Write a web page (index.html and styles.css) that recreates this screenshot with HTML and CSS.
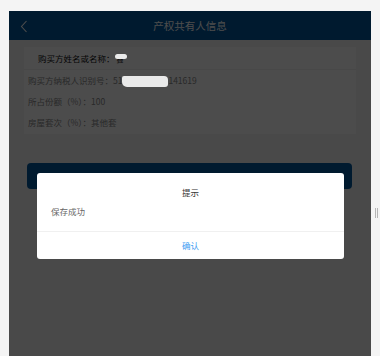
FILE: index.html
```html
<!DOCTYPE html>
<html lang="zh-CN">
<head>
    <meta charset="UTF-8">
    <meta name="viewport" content="width=device-width, initial-scale=1.0">
    <title>产权共有人信息</title>
    <link rel="stylesheet" href="styles.css">
</head>
<body>
    <div class="phone">
        <div class="header">
            <svg class="back" width="8" height="13" viewBox="0 0 8 13">
                <path d="M6.5 1 L1.5 6.5 L6.5 12" fill="none" stroke="#fff" stroke-width="1.1"/>
            </svg>
            <span class="title">产权共有人信息</span>
        </div>

        <div class="card">
            <div class="row row-main">购买方姓名或名称：<span class="redact redact-a"></span><span class="redact-name">鑫</span></div>
            <div class="row">购买方纳税人识别号：51<span class="redact redact-b"></span>141619</div>
            <div class="row">所占份额（%）：100</div>
            <div class="row">房屋套次（%）：其他套</div>
        </div>

        <div class="save-btn"></div>

        <div class="mask"></div>
        <div class="dialog">
            <div class="dialog-title">提示</div>
            <div class="dialog-msg">保存成功</div>
            <div class="dialog-ok">确认</div>
        </div>
    </div>
    <div class="grip"></div>
</body>
</html>
```

FILE: styles.css
```css
body {
    margin: 0;
    background: #f4f4f4;
    font-family: "Noto Sans CJK SC", "Noto Sans", sans-serif;
    overflow: hidden;
}

.phone {
    position: relative;
    margin: 11px 0 0 9px;
    width: 362px;
    height: 345px;
    background: #f5f5f5;
    overflow: hidden;
}

.header {
    height: 29px;
    background: #00589e;
    display: flex;
    align-items: center;
    justify-content: center;
    position: relative;
}

.back {
    position: absolute;
    left: 11px;
    top: 9px;
}

.title {
    color: #fff;
    font-size: 10.5px;
}

.card {
    margin: 7px 15px 0;
    background: #fff;
    height: 87px;
}

.row {
    height: 21px;
    line-height: 21px;
    padding-left: 4px;
    font-size: 8.5px;
    color: #8a8a8a;
    white-space: nowrap;
}

.row-main {
    height: 22px;
    line-height: 22px;
    padding-left: 14px;
    color: #111;
    border-bottom: 1px solid #f2f2f2;
}

.redact {
    position: relative;
    z-index: 3;
    display: inline-block;
    background: #eaeaea;
    filter: blur(0.6px);
    vertical-align: middle;
}

.redact-a {
    width: 12px;
    height: 5px;
    border-radius: 3px;
    margin-top: -6px;
}

.redact-name {
    margin-left: -10px;
    font-size: 7px;
    color: #222;
}

.redact-b {
    width: 46px;
    height: 11px;
    border-radius: 2px 4px 3px 5px;
    margin-top: -1px;
}

.save-btn {
    margin: 29px 19px 0 18px;
    height: 26px;
    background: #00589e;
    border-radius: 4px;
}

.mask {
    position: absolute;
    inset: 0;
    background: rgba(0, 0, 0, 0.7);
    z-index: 2;
}

.dialog {
    position: absolute;
    z-index: 4;
    left: 28px;
    top: 162px;
    width: 307px;
    background: #fff;
    border-radius: 3px;
    font-size: 8.5px;
}

.dialog-title {
    text-align: center;
    color: #333;
    line-height: 14px;
    padding-top: 12px;
}

.dialog-msg {
    color: #666;
    line-height: 14px;
    padding: 5px 14px 13px;
}

.dialog-ok {
    border-top: 1px solid #f0f0f0;
    height: 27px;
    line-height: 27px;
    text-align: center;
    color: #3d9cf2;
}

.grip {
    position: absolute;
    left: 375px;
    top: 208px;
    width: 1px;
    height: 10px;
    border-left: 1px solid #b5b5b5;
    border-right: 1px solid #b5b5b5;
}
```
